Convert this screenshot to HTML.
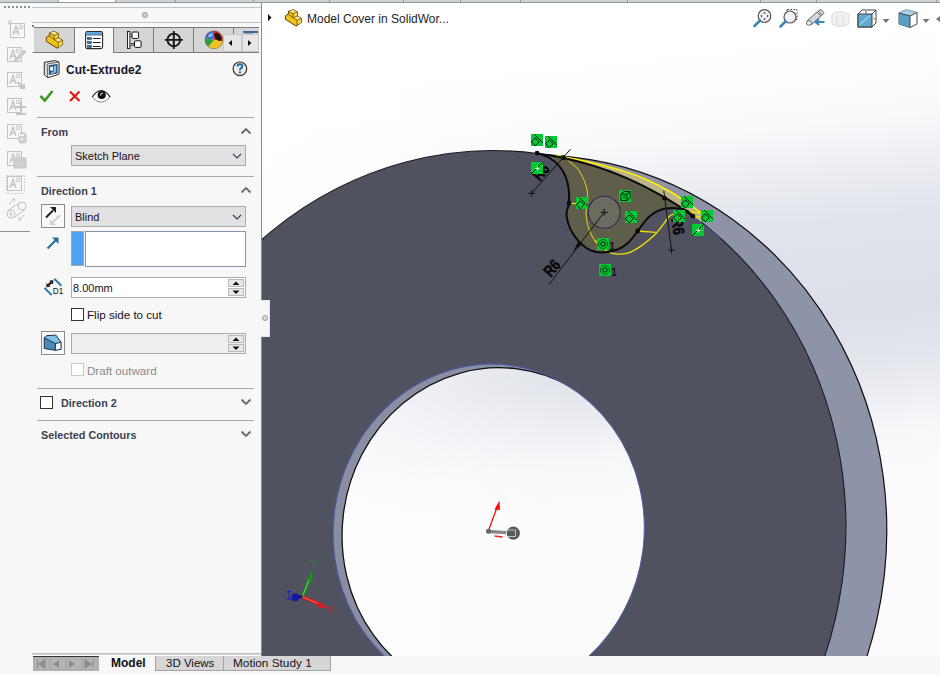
<!DOCTYPE html><html><head><meta charset="utf-8"><style>
*{margin:0;padding:0;box-sizing:border-box}
html,body{width:940px;height:674px;overflow:hidden;background:#f7f7f7;font-family:"Liberation Sans",sans-serif;color:#1e1e1e}
.a{position:absolute}
.t{position:absolute;white-space:nowrap;line-height:1}
.sep{position:absolute;left:37px;width:217px;height:1px;background:#a8a8a8}
.hdr{position:absolute;left:41px;font-weight:bold;font-size:10.8px;color:#3c4150;white-space:nowrap;line-height:1}
.dd{position:absolute;left:71px;width:175px;height:21px;background:#e1e1e1;border:1px solid #ababab}
.inp{position:absolute;left:71px;width:175px;height:21px;background:#fff;border:1px solid #acacac}
.car{position:absolute;width:10px;height:6px}
</style></head><body><svg class="a" style="left:0;top:0" width="940" height="674" viewBox="0 0 940 674"><defs><clipPath id="vp"><rect x="261" y="3" width="679" height="653"/></clipPath><linearGradient id="bgv" x1="940" y1="0" x2="1008.2" y2="648.8" gradientUnits="userSpaceOnUse"><stop offset="0" stop-color="#ffffff"/><stop offset="0.09" stop-color="#fefefe"/><stop offset="0.17" stop-color="#f8f9fb"/><stop offset="0.24" stop-color="#eceef3"/><stop offset="0.32" stop-color="#e1e4ec"/><stop offset="0.46" stop-color="#dcdfe8"/><stop offset="0.53" stop-color="#e2e5ec"/><stop offset="0.59" stop-color="#eceef3"/><stop offset="0.65" stop-color="#f7f8fa"/><stop offset="0.71" stop-color="#fbfbfc"/><stop offset="1" stop-color="#fbfbfc"/></linearGradient><linearGradient id="bgh" x1="261" y1="0" x2="570" y2="0" gradientUnits="userSpaceOnUse"><stop offset="0" stop-color="#fff" stop-opacity="0.92"/><stop offset="1" stop-color="#fff" stop-opacity="0"/></linearGradient><clipPath id="hf"><ellipse cx="488.73" cy="530.73" rx="155.41" ry="166.77" transform="rotate(7.219 488.73 530.73)" /></clipPath><clipPath id="hb"><ellipse cx="496.33" cy="532.93" rx="154.09" ry="165.36" transform="rotate(7.219 496.33 532.93)" /></clipPath></defs><g clip-path="url(#vp)"><rect x="261" y="3" width="679" height="653" fill="url(#bgv)"/><rect x="261" y="3" width="679" height="653" fill="url(#bgh)"/><rect x="261" y="3" width="1" height="653" fill="#8c8c8c"/><ellipse cx="521.87" cy="540.80" rx="363.69" ry="387.35" transform="rotate(12.883 521.87 540.80)" fill="#8f93a7" stroke="#111" stroke-width="1.2"/><ellipse cx="486.95" cy="533.07" rx="358.48" ry="382.93" transform="rotate(7.862 486.95 533.07)" fill="#50535f" stroke="#1a1a22" stroke-width="1.1"/><ellipse cx="488.73" cy="530.73" rx="155.41" ry="166.77" transform="rotate(7.219 488.73 530.73)" fill="#8a8ea2"/><g clip-path="url(#hf)"><g clip-path="url(#hb)"><rect x="261" y="3" width="679" height="653" fill="url(#bgv)"/><rect x="261" y="3" width="679" height="653" fill="url(#bgh)"/></g><ellipse cx="496.33" cy="532.93" rx="154.09" ry="165.36" transform="rotate(7.219 496.33 532.93)" fill="none" stroke="#111" stroke-width="1.3"/></g><g clip-path="url(#hf)"></g><ellipse cx="488.73" cy="530.73" rx="155.41" ry="166.77" transform="rotate(7.219 488.73 530.73)" fill="none" stroke="#4a5aa8" stroke-width="1"/><path d="M556.00 155.30 C557.25 155.55 557.83 155.63 563.50 156.80 C569.17 157.97 581.42 160.33 590.00 162.30 C598.58 164.27 606.00 165.88 615.00 168.60 C624.00 171.32 634.50 174.57 644.00 178.60 C653.50 182.63 662.50 187.15 672.00 192.80 C681.50 198.45 696.17 209.22 701.00 212.50 L701.00 222.01 L691.33 214.80 L681.67 208.09 L672.00 201.85 L662.33 196.07 L652.67 190.68 L643.00 185.70 L633.33 181.10 L623.67 176.86 L614.00 172.98 L604.33 169.44 L594.67 166.22 L585.00 163.32 L575.33 160.74 L565.67 158.45 L556.00 156.47Z" fill="#b9b58a"/><path d="M537.10 153.44 L545.30 154.62 L553.50 156.00 L561.70 157.60 L569.90 159.41 L578.10 161.44 L586.30 163.69 L594.50 166.16 L602.70 168.86 L610.90 171.81 L619.10 174.98 L627.30 178.42 L635.50 182.09 L643.70 186.05 L651.90 190.27 L660.10 194.78 L668.30 199.58 L676.50 204.70 L684.70 210.15 L692.90 215.92 L692.90 216.20 C691.52 215.12 689.15 210.97 684.60 209.70 C680.05 208.43 671.37 207.55 665.60 208.60 C659.83 209.65 654.65 212.27 650.00 216.00 C645.35 219.73 639.75 228.50 637.70 231.00 L637.70 231.00 C636.08 233.00 631.48 239.88 628.00 243.00 C624.52 246.12 621.63 248.15 616.80 249.70 C611.97 251.25 604.30 252.75 599.00 252.30 C593.70 251.85 589.50 250.38 585.00 247.00 C580.50 243.62 575.08 237.33 572.00 232.00 C568.92 226.67 567.00 219.82 566.50 215.00 C566.00 210.18 568.65 207.50 569.00 203.10 C569.35 198.70 569.20 193.10 568.60 188.60 C568.00 184.10 566.98 179.90 565.40 176.10 C563.82 172.30 561.87 168.90 559.10 165.80 C556.33 162.70 552.47 159.62 548.80 157.50 C545.13 155.38 539.05 153.83 537.10 153.10Z" fill="#5e5e4b"/><circle cx="604.2" cy="212.3" r="16" fill="#6c6c5e" stroke="#2a3050" stroke-width="1.1"/><path d="M556.00 155.30 C557.25 155.55 557.83 155.63 563.50 156.80 C569.17 157.97 581.42 160.33 590.00 162.30 C598.58 164.27 606.00 165.88 615.00 168.60 C624.00 171.32 634.50 174.57 644.00 178.60 C653.50 182.63 662.50 187.15 672.00 192.80 C681.50 198.45 696.17 209.22 701.00 212.50" fill="none" stroke="#ffef00" stroke-width="1.6"/><path d="M568.40 160.70 C570.17 162.33 576.03 166.28 579.00 170.50 C581.97 174.72 584.73 181.10 586.20 186.00 C587.67 190.90 587.83 195.23 587.80 199.90 C587.77 204.57 585.88 209.32 586.00 214.00 C586.12 218.68 587.08 223.67 588.50 228.00 C589.92 232.33 592.08 236.58 594.50 240.00 C596.92 243.42 601.58 247.08 603.00 248.50" fill="none" stroke="#d2c02a" stroke-width="1.1"/><path d="M594.50 240.00 C595.92 241.42 600.03 246.27 603.00 248.50 C605.97 250.73 607.80 252.75 612.30 253.40 C616.80 254.05 623.10 255.33 630.00 252.40 C636.90 249.47 647.20 241.73 653.70 235.80 C660.20 229.87 665.70 220.35 669.00 216.80 C672.30 213.25 672.75 214.88 673.50 214.50" fill="none" stroke="#f2e200" stroke-width="1.3"/><path d="M637.7 231 L655.5 232.4 M569 203.3 L577 203.6 M686 211 L702 213.5 M693 216.5 L702 217" fill="none" stroke="#f0e000" stroke-width="1.3"/><path d="M537.10 153.44 L545.30 154.62 L553.50 156.00 L561.70 157.60 L569.90 159.41 L578.10 161.44 L586.30 163.69 L594.50 166.16 L602.70 168.86 L610.90 171.81 L619.10 174.98 L627.30 178.42 L635.50 182.09 L643.70 186.05 L651.90 190.27 L660.10 194.78 L668.30 199.58 L676.50 204.70 L684.70 210.15 L692.90 215.92" fill="none" stroke="#0a0a0a" stroke-width="2"/><path d="M692.90 216.20 C691.52 215.12 689.15 210.97 684.60 209.70 C680.05 208.43 671.37 207.55 665.60 208.60 C659.83 209.65 654.65 212.27 650.00 216.00 C645.35 219.73 639.75 228.50 637.70 231.00" fill="none" stroke="#0a0a0a" stroke-width="2"/><path d="M637.70 231.00 C636.08 233.00 631.48 239.88 628.00 243.00 C624.52 246.12 621.63 248.15 616.80 249.70 C611.97 251.25 604.30 252.75 599.00 252.30 C593.70 251.85 589.50 250.38 585.00 247.00 C580.50 243.62 575.08 237.33 572.00 232.00 C568.92 226.67 567.00 219.82 566.50 215.00 C566.00 210.18 568.65 207.50 569.00 203.10 C569.35 198.70 569.20 193.10 568.60 188.60 C568.00 184.10 566.98 179.90 565.40 176.10 C563.82 172.30 561.87 168.90 559.10 165.80 C556.33 162.70 552.47 159.62 548.80 157.50 C545.13 155.38 539.05 153.83 537.10 153.10" fill="none" stroke="#0a0a0a" stroke-width="2"/><path d="M693 216.5 L720 238.3" stroke="#4858a8" stroke-width="1"/><circle cx="537.1" cy="153.1" r="2.4" fill="#080808"/><circle cx="563.4" cy="157.7" r="2.4" fill="#080808"/><circle cx="569" cy="203.2" r="2.4" fill="#080808"/><circle cx="637.7" cy="231" r="2.4" fill="#080808"/><circle cx="692.9" cy="216.2" r="2.4" fill="#080808"/><circle cx="664.5" cy="198.2" r="2.4" fill="#080808"/><path d="M531.6 193.3 L570.5 149.2 M604.2 212.3 L549 284.5 M663.8 190.7 L671.5 250" stroke="#111" stroke-width="1" fill="none"/><path d="M573.2 251.5 L578.2 241.5 L582 244.6Z" fill="#111"/><path d="M528.1 193.3 H535.1 M531.6 189.8 V196.8" stroke="#111" stroke-width="1"/><path d="M600.7 212.3 H607.7 M604.2 208.8 V215.8" stroke="#111" stroke-width="1"/><path d="M668.0 250 H675.0 M671.5 246.5 V253.5" stroke="#111" stroke-width="1"/><text x="0" y="0" font-family="Liberation Sans" font-weight="bold" font-size="16" fill="#0a0a0a" stroke="#0a0a0a" stroke-width="0.6" transform="translate(539.7 181.8) rotate(-50) scale(0.8 1)">R6</text><text x="0" y="0" font-family="Liberation Sans" font-weight="bold" font-size="16" fill="#0a0a0a" stroke="#0a0a0a" stroke-width="0.6" transform="translate(550.8 277.8) rotate(-50) scale(0.8 1)">R6</text><text x="0" y="0" font-family="Liberation Sans" font-weight="bold" font-size="16" fill="#0a0a0a" stroke="#0a0a0a" stroke-width="0.6" transform="translate(671.5 219) rotate(82.6) scale(0.8 1)">R6</text><g transform="translate(531 134)"><rect width="12" height="12" fill="#00c932"/><path d="M3.2 0.3 L12 9.1" stroke="#111" stroke-width="1"/><path d="M4.3 3.9 L8.2 7.8 L4.3 11.7 L0.4 7.8Z" fill="#00c932" stroke="#111" stroke-width="1" stroke-linejoin="round"/></g><g transform="translate(545 136)"><rect width="12" height="12" fill="#00c932"/><path d="M3.2 0.3 L12 9.1" stroke="#111" stroke-width="1"/><path d="M4.3 3.9 L8.2 7.8 L4.3 11.7 L0.4 7.8Z" fill="#00c932" stroke="#111" stroke-width="1" stroke-linejoin="round"/></g><g transform="translate(531 162)"><rect width="12" height="12" fill="#00c932"/><path d="M0 12 L12 0" stroke="#111" stroke-width="1"/><path d="M6.4 4.4 V8.6 M4.3 6.5 H8.5" stroke="#e8f0e8" stroke-width="1"/></g><g transform="translate(576 197)"><rect width="12" height="12" fill="#00c932"/><path d="M3.2 0.3 L12 9.1" stroke="#111" stroke-width="1"/><path d="M4.3 3.9 L8.2 7.8 L4.3 11.7 L0.4 7.8Z" fill="#00c932" stroke="#111" stroke-width="1" stroke-linejoin="round"/></g><g transform="translate(619 190)"><rect width="12" height="12" fill="#00c932"/><path d="M2 4 L5 1.5 L11 1.5 L11 8 L8 10.5 L2 10.5Z M2 4 L8 4 L11 1.5 M8 4 L8 10.5" fill="none" stroke="#111" stroke-width="0.9"/><path d="M4 6 H7 M4 8 H7" stroke="#111" stroke-width="0.6"/></g><g transform="translate(625 211)"><rect width="12" height="12" fill="#00c932"/><path d="M3.2 0.3 L12 9.1" stroke="#111" stroke-width="1"/><path d="M4.3 3.9 L8.2 7.8 L4.3 11.7 L0.4 7.8Z" fill="#00c932" stroke="#111" stroke-width="1" stroke-linejoin="round"/></g><g transform="translate(597 238)"><rect width="12" height="12" fill="#00c932"/><circle cx="6" cy="6" r="4.5" fill="none" stroke="#111" stroke-width="0.9" stroke-dasharray="2 0.8"/><circle cx="6" cy="6" r="2.2" fill="none" stroke="#111" stroke-width="1"/><text x="12.3" y="12" font-family="Liberation Sans" font-weight="bold" font-size="10" fill="#111">1</text></g><g transform="translate(599 264)"><rect width="12" height="12" fill="#00c932"/><circle cx="6" cy="6" r="4.5" fill="none" stroke="#111" stroke-width="0.9" stroke-dasharray="2 0.8"/><circle cx="6" cy="6" r="2.2" fill="none" stroke="#111" stroke-width="1"/><text x="12.3" y="12" font-family="Liberation Sans" font-weight="bold" font-size="10" fill="#111">1</text></g><g transform="translate(681 196)"><rect width="12" height="12" fill="#00c932"/><path d="M3.2 0.3 L12 9.1" stroke="#111" stroke-width="1"/><path d="M4.3 3.9 L8.2 7.8 L4.3 11.7 L0.4 7.8Z" fill="#00c932" stroke="#111" stroke-width="1" stroke-linejoin="round"/></g><g transform="translate(673 210)"><rect width="12" height="12" fill="#00c932"/><path d="M3.2 0.3 L12 9.1" stroke="#111" stroke-width="1"/><path d="M4.3 3.9 L8.2 7.8 L4.3 11.7 L0.4 7.8Z" fill="#00c932" stroke="#111" stroke-width="1" stroke-linejoin="round"/></g><g transform="translate(701 210)"><rect width="12" height="12" fill="#00c932"/><path d="M3.2 0.3 L12 9.1" stroke="#111" stroke-width="1"/><path d="M4.3 3.9 L8.2 7.8 L4.3 11.7 L0.4 7.8Z" fill="#00c932" stroke="#111" stroke-width="1" stroke-linejoin="round"/></g><g transform="translate(692 224)"><rect width="12" height="12" fill="#00c932"/><path d="M0 12 L12 0" stroke="#111" stroke-width="1"/><path d="M6.4 4.4 V8.6 M4.3 6.5 H8.5" stroke="#e8f0e8" stroke-width="1"/></g><g><path d="M488.5 530.5 L497.5 506" stroke="#ff0a0a" stroke-width="1.3"/><path d="M499.5 500.5 L494.5 509.5 L500 510Z" fill="#ff0a0a"/><path d="M489 531.5 L506 532.6" stroke="#888" stroke-width="3.4"/><circle cx="513.3" cy="533.2" r="6.6" fill="#5a5a5a"/><rect x="506.5" y="530" width="9" height="6.5" fill="none" stroke="#ddd" stroke-width="0.8"/><circle cx="488.5" cy="531.3" r="2.5" fill="#666"/><path d="M494.5 536 L502.5 537" stroke="#ff1a1a" stroke-width="1.4"/></g><g><path d="M302.3 596.9 L310.5 576" stroke="#189018" stroke-width="3"/><path d="M302.3 596.9 L310.5 576" stroke="#7be07b" stroke-width="0.8"/><path d="M312.5 569.5 L306.5 580 L312.5 581Z" fill="#1e8c1e"/><path d="M310.6 560 L313.6 563.5 L316.6 560 M313.6 563.5 V568" stroke="#1a9a1a" stroke-width="0.9" fill="none"/><path d="M302.3 596.9 L322 605" stroke="#dd1515" stroke-width="3"/><path d="M302.3 596.9 L322 605" stroke="#ff7b7b" stroke-width="0.8"/><path d="M328.1 608.4 L318.5 601.5 L317 607Z" fill="#e01a1a"/><path d="M328 606 L333 612 M333 606 L328 612" stroke="#ee1010" stroke-width="0.9"/><path d="M296 596.5 L302.3 597" stroke="#141470" stroke-width="3"/><circle cx="295.3" cy="597.3" r="4" fill="#18189a"/><path d="M287 591.5 H291 M289 591.5 V599 M287 599 H291" stroke="#1010ff" stroke-width="0.9" fill="none"/></g><g transform="translate(753 9)"><circle cx="11.5" cy="7" r="6.3" fill="#eef2f6" stroke="#555" stroke-width="1.2"/><path d="M11.5 2.8 L13 4.6 H10Z M11.5 11.2 L13 9.4 H10Z M7.3 7 L9.1 5.5 V8.5Z M15.7 7 L13.9 5.5 V8.5Z" fill="#444"/><path d="M7 11.5 L1.5 17" stroke="#3f86c0" stroke-width="2.6" stroke-linecap="round"/></g><g transform="translate(779 9)"><rect x="8" y="0.5" width="10" height="10" fill="none" stroke="#444" stroke-width="0.9" stroke-dasharray="2 1.2"/><circle cx="11" cy="8" r="6" fill="#eef2f6" stroke="#555" stroke-width="1.2"/><path d="M6.5 12.5 L1.5 17.5" stroke="#3f86c0" stroke-width="2.6" stroke-linecap="round"/></g><g transform="translate(806 9)"><path d="M1 12 L11 3 L15 7 L5 16 Z" fill="#d8d8d8" stroke="#555" stroke-width="0.9"/><path d="M12 2 L15 0.5 L18 3.5 L16 6.5Z" fill="#cfcfcf" stroke="#555" stroke-width="0.8"/><ellipse cx="3" cy="14" rx="2.6" ry="2.3" fill="#eee" stroke="#555" stroke-width="0.8"/><path d="M18.5 13 H10 M13 10 L9.5 13 L13 16" stroke="#3a84c0" stroke-width="2.2" fill="none"/></g><g transform="translate(831 10)" opacity="0.5"><path d="M1 4 Q9 -1 18 4 V14 Q9 19 1 14 Z" fill="#e4e4e4" stroke="#bdbdbd" stroke-width="1"/><path d="M6 5 V16 M12 5 V16" stroke="#bdbdbd" stroke-width="1.2"/></g><g transform="translate(857 9)"><path d="M1 5 L5 1 L19 1 L19 14 L15 18 L1 18Z" fill="#fff" stroke="#333" stroke-width="0.9"/><rect x="1" y="5" width="14" height="13" fill="#62a8d0" stroke="#333" stroke-width="0.9"/><path d="M15 5 L19 1" stroke="#333" stroke-width="0.9"/><path d="M2.5 16 L13 6.5" stroke="#9ad0ea" stroke-width="1.5"/><path d="M9 2 V4.5 M16.5 9 L18 10.5" stroke="#333" stroke-width="0.9"/></g><path d="M882.5 19 H889.5 L886 23Z" fill="#777"/><g transform="translate(898 9)"><path d="M1 4 L8 0.8 L19 3.5 L19 15 L12 18.5 L1 15Z" fill="#fff" stroke="#333" stroke-width="0.9"/><path d="M1 4 L12 7 L12 18.5 L1 15Z" fill="#5a9ec8"/><path d="M1 4 L8 0.8 L19 3.5 L12 7Z" fill="#a8d0e6"/><path d="M1 4 L12 7 L19 3.5 M12 7 V18.5" stroke="#333" stroke-width="0.9" fill="none"/></g><path d="M922.5 19 H929.5 L926 23Z" fill="#777"/><path d="M940 16 L936 19 L940 22Z" fill="#777"/><g transform="translate(285 9.3) scale(0.98)" stroke-linejoin="round"><path d="M0.4 6.6 L3.4 4.9 L3.7 2 L8.2 0.4 L12.6 2.6 L12.6 6.8 L16.8 9.3 L16.8 13.4 L11.4 17.2 L0.6 10.4 Z" fill="#f1c21a" stroke="#5a4200" stroke-width="1"/><path d="M3.9 2.1 L8.2 0.6 L12.4 2.7 L8.2 4.4Z" fill="#fbe68e"/><path d="M8.4 4.5 L12.4 2.8 L12.4 6.9 L8.4 8.6Z" fill="#f7d84a"/><path d="M8.4 8.7 L12.5 7 L16.6 9.4 L12.4 11.2Z" fill="#fbe68e"/><path d="M12.5 11.3 L16.6 9.5 L16.6 13.3 L12.2 16.4Z" fill="#f7d84a"/><path d="M3.7 2 L8.2 4.4 L12.6 2.6 M8.2 4.4 L8.2 8.6 L12.4 11.2 L16.8 9.3 M12.4 11.2 L12.2 16.6 M3.4 4.9 L8.2 8.6 M12.6 6.8 L8.2 8.6" fill="none" stroke="#5a4200" stroke-width="0.75"/></g><path d="M268 14 L271.5 17.6 L268 21.2Z" fill="#111"/><text x="307" y="22.8" font-family="Liberation Sans" font-size="12" fill="#1e1e1e">Model Cover in SolidWor...</text></g></svg><div class="a" style="left:0;top:0;width:940px;height:3px;background:#d2d2d2"></div><div class="a" style="left:59px;top:0;width:56px;height:2px;background:#fdfdfd"></div><div class="a" style="left:58px;top:0;width:1px;height:3px;background:#9a9a9a"></div><div class="a" style="left:115px;top:0;width:1px;height:3px;background:#9a9a9a"></div><div class="a" style="left:175px;top:0;width:1px;height:3px;background:#9a9a9a"></div><div class="a" style="left:253px;top:0;width:1px;height:3px;background:#9a9a9a"></div><div class="a" style="left:329px;top:0;width:1px;height:3px;background:#9a9a9a"></div><div class="a" style="left:403px;top:0;width:1px;height:3px;background:#9a9a9a"></div><div class="a" style="left:460px;top:0;width:1px;height:3px;background:#9a9a9a"></div><div class="a" style="left:520px;top:0;width:1px;height:3px;background:#9a9a9a"></div><div class="a" style="left:627px;top:0;width:1px;height:3px;background:#9a9a9a"></div><div class="a" style="left:760px;top:0;width:1px;height:3px;background:#9a9a9a"></div><div class="a" style="left:816px;top:0;width:1px;height:3px;background:#9a9a9a"></div><div class="a" style="left:936px;top:0;width:1px;height:3px;background:#9a9a9a"></div><div class="a" style="left:0;top:2px;width:940px;height:1px;background:#8a9aa0"></div><div class="a" style="left:3.5px;top:5.5px;width:2px;height:2px;border-radius:50%;background:#6a6a6a"></div><div class="a" style="left:7.5px;top:5.5px;width:2px;height:2px;border-radius:50%;background:#6a6a6a"></div><div class="a" style="left:11.5px;top:5.5px;width:2px;height:2px;border-radius:50%;background:#6a6a6a"></div><div class="a" style="left:15.5px;top:5.5px;width:2px;height:2px;border-radius:50%;background:#6a6a6a"></div><div class="a" style="left:19.5px;top:5.5px;width:2px;height:2px;border-radius:50%;background:#6a6a6a"></div><div class="a" style="left:23.5px;top:5.5px;width:2px;height:2px;border-radius:50%;background:#6a6a6a"></div><div class="a" style="left:27.5px;top:5.5px;width:2px;height:2px;border-radius:50%;background:#6a6a6a"></div><div class="a" style="left:32px;top:7px;width:229px;height:1px;background:#c4c4c4"></div><div class="a" style="left:142px;top:12px;width:6px;height:6px;border-radius:50%;background:#d0d0d0;border:1px solid #9a9a9a"></div><div class="a" style="left:32px;top:22px;width:229px;height:1px;background:#c4c4c4"></div><div class="a" style="left:34px;top:27px;width:225px;height:1px;background:#7c7c7c"></div><div class="a" style="left:32px;top:25px;width:2px;height:2px;background:#777"></div><div class="a" style="left:34px;top:28px;width:40px;height:25px;background:#d5d5d5;border-bottom:1px solid #7c7c7c"></div><div class="a" style="left:74px;top:28px;width:39px;height:25px;background:#f7f7f7;border-left:1px solid #7c7c7c;"></div><div class="a" style="left:113px;top:28px;width:40px;height:25px;background:#d5d5d5;border-left:1px solid #7c7c7c;border-bottom:1px solid #7c7c7c"></div><div class="a" style="left:153px;top:28px;width:40px;height:25px;background:#d5d5d5;border-left:1px solid #7c7c7c;border-bottom:1px solid #7c7c7c"></div><div class="a" style="left:193px;top:28px;width:40px;height:25px;background:#d5d5d5;border-left:1px solid #7c7c7c;border-bottom:1px solid #7c7c7c"></div><div class="a" style="left:233px;top:28px;width:26px;height:25px;background:#d5d5d5;border-left:1px solid #7c7c7c;border-bottom:1px solid #7c7c7c"></div><div class="a" style="left:32px;top:52px;width:2px;height:1px;background:#aaa"></div><svg class="a" style="left:0;top:0" width="262" height="60"><g transform="translate(45.8 31) scale(1.0)" stroke-linejoin="round"><path d="M0.4 6.6 L3.4 4.9 L3.7 2 L8.2 0.4 L12.6 2.6 L12.6 6.8 L16.8 9.3 L16.8 13.4 L11.4 17.2 L0.6 10.4 Z" fill="#f1c21a" stroke="#5a4200" stroke-width="1"/><path d="M3.9 2.1 L8.2 0.6 L12.4 2.7 L8.2 4.4Z" fill="#fbe68e"/><path d="M8.4 4.5 L12.4 2.8 L12.4 6.9 L8.4 8.6Z" fill="#f7d84a"/><path d="M8.4 8.7 L12.5 7 L16.6 9.4 L12.4 11.2Z" fill="#fbe68e"/><path d="M12.5 11.3 L16.6 9.5 L16.6 13.3 L12.2 16.4Z" fill="#f7d84a"/><path d="M3.7 2 L8.2 4.4 L12.6 2.6 M8.2 4.4 L8.2 8.6 L12.4 11.2 L16.8 9.3 M12.4 11.2 L12.2 16.6 M3.4 4.9 L8.2 8.6 M12.6 6.8 L8.2 8.6" fill="none" stroke="#5a4200" stroke-width="0.75"/></g><g transform="translate(85 31)"><rect x="0.6" y="0.6" width="17" height="17" rx="1.8" fill="#fff" stroke="#2b2b2b" stroke-width="1.1"/><rect x="1.2" y="1.2" width="15.8" height="2.6" fill="#5aa2dc"/><path d="M1 4 H17.2" stroke="#1f4f78" stroke-width="0.8"/><rect x="2.4" y="6.5" width="4.2" height="2" fill="#2e6e9e" stroke="#14324a" stroke-width="0.5"/><rect x="2.4" y="10.5" width="4.2" height="2" fill="#2e6e9e" stroke="#14324a" stroke-width="0.5"/><rect x="2.4" y="14.5" width="4.2" height="2" fill="#2e6e9e" stroke="#14324a" stroke-width="0.5"/><path d="M8 7.5 H15.6 M8 11.5 H15.6 M8 15.5 H15.6" stroke="#222" stroke-width="1"/></g><g transform="translate(127 31)"><rect x="0.5" y="0.5" width="2.4" height="17" fill="#fff" stroke="#111" stroke-width="0.9"/><path d="M2.9 4.6 H5.5 M2.9 13.2 H8" stroke="#111" stroke-width="2.4"/><path d="M2.9 4.6 H5.5 M2.9 13.2 H8" stroke="#fff" stroke-width="0.8"/><rect x="5" y="1" width="6.6" height="6.4" rx="1" fill="#fff" stroke="#111" stroke-width="1"/><rect x="7.5" y="9.8" width="6.6" height="6.6" rx="1" fill="#fff" stroke="#111" stroke-width="1"/></g><g><circle cx="173.8" cy="39.9" r="6.3" fill="none" stroke="#161616" stroke-width="1.9"/><path d="M164.8 39.9 H182.8 M173.8 30.9 V48.9" stroke="#161616" stroke-width="1.9"/></g><g><path d="M214 39.8 L212.44 30.94 A9 9 0 0 1 222.86 41.36Z" fill="#e0241c"/><path d="M214 39.8 L222.86 41.36 A9 9 0 0 1 208.21 46.69Z" fill="#ecc224"/><path d="M214 39.8 L208.21 46.69 A9 9 0 0 1 205.14 38.24Z" fill="#2e9e34"/><path d="M214 39.8 L205.14 38.24 A9 9 0 0 1 212.44 30.94Z" fill="#2f6fd6"/><ellipse cx="217.8" cy="36.8" rx="2.7" ry="4.6" transform="rotate(-38 217.8 36.8)" fill="#151515"/><ellipse cx="210.5" cy="35.3" rx="2.6" ry="1.6" transform="rotate(-30 210.5 35.3)" fill="#fff" opacity="0.5"/><circle cx="214" cy="39.8" r="9" fill="none" stroke="#7a5a30" stroke-width="0.5"/></g><rect x="243" y="31" width="15" height="2" fill="#3a6a98"/><rect x="245" y="33" width="8" height="1" fill="#8ab"/></svg><div class="a" style="left:223px;top:34px;width:19px;height:18px;background:#e6e6e6;border:1px solid #c8c8c8"></div><div class="a" style="left:242px;top:34px;width:17px;height:18px;background:#e6e6e6;border:1px solid #c8c8c8"></div><svg class="a" style="left:0;top:0" width="262" height="60"><path d="M228.5 43 L232 40 L232 46Z" fill="#111"/><path d="M251.5 43 L248 40 L248 46Z" fill="#111"/></svg><div class="a" style="left:261px;top:3px;width:1px;height:653px;background:#8c8c8c"></div><svg class="a" style="left:0;top:0" width="32" height="235" fill="none" stroke="#c2c2c2" stroke-width="1"><rect x="10.5" y="23.5" width="14" height="14"/><path d="M13 35 L16 26 L19 35 M14 32 L18 32" stroke-width="1.3"/><circle cx="21" cy="27" r="1.8"/><rect x="7.5" y="47.5" width="14" height="14"/><path d="M10 59 L13 50 L16 59 M11 56 L15 56" stroke-width="1.3"/><circle cx="18" cy="51" r="1.8"/><rect x="7.5" y="72.5" width="14" height="14"/><path d="M10 84 L13 75 L16 84 M11 81 L15 81" stroke-width="1.3"/><circle cx="18" cy="76" r="1.8"/><rect x="7.5" y="98.5" width="14" height="14"/><path d="M10 110 L13 101 L16 110 M11 107 L15 107" stroke-width="1.3"/><circle cx="18" cy="102" r="1.8"/><rect x="7.5" y="124.5" width="14" height="14"/><path d="M10 136 L13 127 L16 136 M11 133 L15 133" stroke-width="1.3"/><circle cx="18" cy="128" r="1.8"/><rect x="7.5" y="151.5" width="14" height="14"/><path d="M10 163 L13 154 L16 163 M11 160 L15 160" stroke-width="1.3"/><circle cx="18" cy="155" r="1.8"/><rect x="7.5" y="176.5" width="14" height="14"/><path d="M10 188 L13 179 L16 188 M11 185 L15 185" stroke-width="1.3"/><circle cx="18" cy="180" r="1.8"/><path d="M8 24 L12 20 M10 20 L10 26 M8 22 L12 24" stroke="#c8c8c8"/><path d="M14 60 L24 50 L26 52 L16 62 Z" fill="#d0d0d0"/><path d="M17 82 L24 88 M20 88 L24 88 L24 84" stroke-width="2"/><path d="M16 107 L26 107 M21 102 L21 112 M16 114 L26 114" stroke-width="2"/><rect x="19" y="133" width="7" height="10" rx="2" fill="#cfcfcf"/><rect x="14" y="158" width="12" height="10" fill="#cfcfcf"/><circle cx="11" cy="214" r="4"/><circle cx="22" cy="206" r="4"/><circle cx="11" cy="214" r="1.2"/><path d="M8 210.5 L20 202.5 M14 217.5 L25 209.5 M9 204 L14 199 M12 199 H14.5 V201.5 M19 220 L24 215 M19 217.5 V220 H21.5"/><rect x="6.5" y="175.5" width="18" height="18" stroke-dasharray="1.5 1.5" stroke="#c8c8c8"/><rect x="19" y="134" width="5" height="2" fill="#f0f0f0" stroke="none"/><rect x="20" y="138" width="3" height="2" fill="#f0f0f0" stroke="none"/></svg><div class="a" style="left:0;top:231px;width:30px;height:1px;background:#909090"></div><svg class="a" style="left:43px;top:60px" width="18" height="19" stroke-linejoin="round"><path d="M1.3 2.3 L12.3 0.6 L15.9 2 L15.9 14.1 L4.8 17.7 L1.3 14.8Z" fill="#e2e2e2" stroke="#2a2a2a" stroke-width="1"/><path d="M4.1 4.1 L15.9 2 L15.9 14.1 L4.8 17.7Z" fill="#f8f8f8" stroke="#3a3a3a" stroke-width="0.8"/><path d="M6.1 5.6 L14.1 4.4 L14.1 13 L6.3 14.6Z" fill="#1d5f95" stroke="#1a2a3a" stroke-width="0.7"/><rect x="7.2" y="6.8" width="2.8" height="3.8" fill="#fff"/><path d="M10.9 5.9 L13.2 5.5 L13.2 11.9 L10.9 12.2Z" fill="#7ec4ee"/><path d="M7.2 13.2 L10.9 11.6 L13.2 11.9 L8.6 13.8Z" fill="#9ad4f2"/></svg><div class="t" style="left:66px;top:64px;font-size:12px;font-weight:bold;color:#15172a">Cut-Extrude2</div><svg class="a" style="left:230px;top:59px" width="20" height="20"><circle cx="9.9" cy="9.8" r="6.8" fill="#ededed" stroke="#353535" stroke-width="1.2"/><path d="M7.5 7.6 Q7.5 5.2 9.9 5.2 Q12.3 5.2 12.3 7.3 Q12.3 8.6 10.9 9.3 Q9.9 9.9 9.9 11.2" fill="none" stroke="#1f6ea6" stroke-width="2"/><rect x="8.9" y="12.4" width="2" height="2" fill="#1f6ea6"/></svg><svg class="a" style="left:38px;top:88px" width="80" height="16"><path d="M2.5 8 L6.8 12.6 L14.5 3" stroke="#3a9a22" stroke-width="2.6" fill="none"/><path d="M32 3.5 L41.5 13 M41.5 3.5 L32 13" stroke="#dd1a10" stroke-width="2.2" fill="none"/><path d="M54.2 9 Q63 -4 72.2 9 Q63 19.5 54.2 9 Z" fill="#fbfbfb" stroke="#8a8a8a" stroke-width="1"/><path d="M54.2 9 Q63 -4 72.2 9" stroke="#2a2a2a" stroke-width="1.2" fill="none"/><circle cx="63.7" cy="7" r="4.1" fill="#111"/><path d="M62.6 7.6 Q62.6 5 64.8 5.2" stroke="#fff" stroke-width="1" fill="none"/></svg><div class="sep" style="top:117px"></div><div class="hdr" style="top:127px">From</div><svg class="a" style="left:240px;top:127px" width="12" height="8"><path d="M1.5 6.5 L6 2 L10.5 6.5" stroke="#6a6a6a" stroke-width="1.8" fill="none"/></svg><div class="dd" style="top:145px"></div><div class="t" style="left:75px;top:151px;font-size:11px;color:#1a1020">Sketch Plane</div><svg class="a" style="left:232px;top:153px" width="10" height="6"><path d="M1 1 L5 5 L9 1" stroke="#3a3a4a" stroke-width="1.1" fill="none"/></svg><div class="sep" style="top:176px"></div><div class="hdr" style="top:186px">Direction 1</div><svg class="a" style="left:240px;top:186px" width="12" height="8"><path d="M1.5 6.5 L6 2 L10.5 6.5" stroke="#6a6a6a" stroke-width="1.8" fill="none"/></svg><div class="a" style="left:41px;top:204px;width:24px;height:24px;border:1px solid #8a8a8a;background:#f9f9f9"></div><svg class="a" style="left:41px;top:204px" width="24" height="24"><path d="M5 13.5 L12 6.5" stroke="#222" stroke-width="2"/><path d="M9 3 L15 3 L15 9 Z" fill="#222"/><path d="M19 11 L12 18" stroke="#d0d0d0" stroke-width="2"/><path d="M9 21 L15 21 L9 15 Z" fill="#d0d0d0"/></svg><div class="dd" style="top:206px"></div><div class="t" style="left:75px;top:212px;font-size:11px;color:#1a1020">Blind</div><svg class="a" style="left:232px;top:214px" width="10" height="6"><path d="M1 1 L5 5 L9 1" stroke="#3a3a4a" stroke-width="1.1" fill="none"/></svg><svg class="a" style="left:44px;top:234px" width="18" height="18"><path d="M3.5 14.5 L12 6" stroke="#2b7090" stroke-width="2.2"/><path d="M8 3.5 L14.5 3.5 L14.5 10 Z" fill="#2b7090"/></svg><div class="a" style="left:71px;top:231px;width:13px;height:35px;background:#4ea3f2;border:1px solid #9aa"></div><div class="a" style="left:85px;top:231px;width:161px;height:36px;background:#fff;border:1px solid #8a92b2"></div><svg class="a" style="left:43px;top:277px" width="22" height="22"><path d="M11.2 1.7 L18.4 8.8 M1.5 11 L8.8 18.1" stroke="#2a78a8" stroke-width="2" fill="none"/><path d="M5.5 8 L8.2 5.4" stroke="#181818" stroke-width="2.2"/><path d="M3.2 10.2 L3.6 6 L7.4 9.8Z M10.4 3.2 L6.2 3.6 L10 7.4Z" fill="#181818"/><text x="9.8" y="17" font-family="Liberation Sans" font-size="8.2" fill="#111">D1</text></svg><div class="inp" style="top:277px;height:21px"></div><div class="t" style="left:73px;top:283px;font-size:11px;color:#1a1020">8.00mm</div><div class="a" style="left:228px;top:279px;width:16px;height:8px;background:#e8e8e8;border:1px solid #b8b8b8"></div><div class="a" style="left:228px;top:288px;width:16px;height:8px;background:#e8e8e8;border:1px solid #b8b8b8"></div><svg class="a" style="left:228px;top:279px" width="16" height="17"><path d="M4.5 6 L8 2.5 L11.5 6Z M4.5 11.5 L8 15 L11.5 11.5Z" fill="#111"/></svg><div class="a" style="left:71px;top:308px;width:13px;height:13px;border:1px solid #333;background:#fff"></div><div class="t" style="left:87px;top:309px;font-size:11.6px;color:#1a1020">Flip side to cut</div><div class="a" style="left:41px;top:331px;width:24px;height:24px;border:1px solid #8a8a8a;background:#f9f9f9"></div><svg class="a" style="left:41px;top:331px" width="24" height="24" stroke-linejoin="round"><path d="M3.2 6.8 L14.4 12.6 L14.4 19.3 L3.2 17.5Z" fill="#4a8ab8"/><path d="M3.2 6.8 L5.9 4.6 L14.8 4.1 L20.1 11.2 L14.4 12.6Z" fill="#7fc0ea"/><path d="M14.4 12.6 L20.1 11.2 L20.1 18.4 L14.4 19.3Z" fill="#f4f4f4"/><path d="M3.2 6.8 L5.9 4.6 L14.8 4.1 L20.1 11.2 L20.1 18.4 L14.4 19.3 L3.2 17.5Z M3.2 6.8 L14.4 12.6 L20.1 11.2 M14.4 12.6 V19.3" fill="none" stroke="#17324a" stroke-width="1"/></svg><div class="inp" style="top:333px;height:21px;background:#eeeeee"></div><div class="a" style="left:228px;top:335px;width:16px;height:8px;background:#e8e8e8;border:1px solid #b8b8b8"></div><div class="a" style="left:228px;top:344px;width:16px;height:8px;background:#e8e8e8;border:1px solid #b8b8b8"></div><svg class="a" style="left:228px;top:335px" width="16" height="17"><path d="M4.5 6 L8 2.5 L11.5 6Z M4.5 11.5 L8 15 L11.5 11.5Z" fill="#111"/></svg><div class="a" style="left:71px;top:363px;width:13px;height:13px;border:1px solid #c8c8c8;background:#fff"></div><div class="t" style="left:87px;top:365px;font-size:11.6px;color:#8a8a8a">Draft outward</div><div class="sep" style="top:388px"></div><div class="a" style="left:40px;top:396px;width:13px;height:13px;border:1px solid #333;background:#fff"></div><div class="hdr" style="left:61px;top:398px">Direction 2</div><svg class="a" style="left:240px;top:398px" width="12" height="8"><path d="M1.5 1.5 L6 6 L10.5 1.5" stroke="#6a6a6a" stroke-width="1.8" fill="none"/></svg><div class="sep" style="top:420px"></div><div class="hdr" style="top:430px;font-size:10.8px">Selected Contours</div><svg class="a" style="left:240px;top:430px" width="12" height="8"><path d="M1.5 1.5 L6 6 L10.5 1.5" stroke="#6a6a6a" stroke-width="1.8" fill="none"/></svg><div class="a" style="left:261px;top:300px;width:9px;height:37px;background:#f7f7f7;border-right:1px solid #e2e2e2;border-bottom:1px solid #e6e6e6;border-top:1px solid #e6e6e6"></div><div class="a" style="left:262px;top:315px;width:6px;height:6px;border-radius:50%;background:#dadada;border:1px solid #9a9a9a"></div><div class="a" style="left:32px;top:653px;width:229px;height:2px;background:#d8d8d8;border-top:1px solid #c0c0c0"></div><div class="a" style="left:33px;top:656px;width:66px;height:15px;background:#b9b9b9;border-top:1px solid #333"></div><svg class="a" style="left:33px;top:656px" width="66" height="15"><rect x="1.0" y="2" width="15" height="12" fill="#b4b4b4" stroke="#a0a0a0" stroke-width="0.6"/><rect x="17.3" y="2" width="15" height="12" fill="#b4b4b4" stroke="#a0a0a0" stroke-width="0.6"/><rect x="33.6" y="2" width="15" height="12" fill="#b4b4b4" stroke="#a0a0a0" stroke-width="0.6"/><rect x="49.9" y="2" width="15" height="12" fill="#b4b4b4" stroke="#a0a0a0" stroke-width="0.6"/><path d="M4.5 4 L4.5 12 M12 4 L6 8 L12 12Z" stroke="#8d8d8d" fill="#8d8d8d" stroke-width="1.2"/><path d="M26 4 L20 8 L26 12Z" fill="#8d8d8d"/><path d="M36 4 L42 8 L36 12Z" fill="#8d8d8d"/><path d="M52 4 L58 8 L52 12Z M60 4 L60 12" stroke="#8d8d8d" fill="#8d8d8d" stroke-width="1.2"/></svg><div class="t" style="left:111px;top:657px;font-size:12px;font-weight:bold;color:#101018">Model</div><div class="a" style="left:155px;top:656px;width:69px;height:15px;background:#d6d6d6;border:1px solid #a4a4a4;border-top:0"></div><div class="a" style="left:223px;top:656px;width:108px;height:15px;background:#d6d6d6;border:1px solid #a4a4a4;border-top:0"></div><div class="t" style="left:166px;top:658px;font-size:11.5px;color:#141020">3D Views</div><div class="t" style="left:233px;top:658px;font-size:11.8px;color:#141020">Motion Study 1</div></body></html>
